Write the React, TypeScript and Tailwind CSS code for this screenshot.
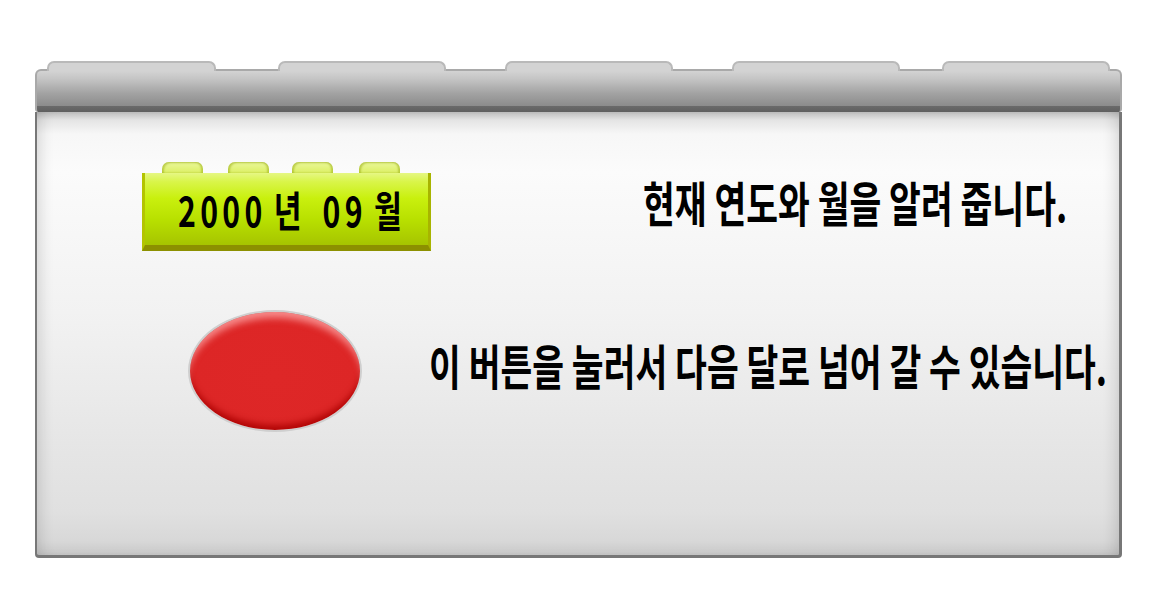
import React from "react";

const KR = { fontFamily: '"Noto Sans CJK KR", "Noto Sans", sans-serif' };

export default function App() {
  const tabs = [
    { ml: "ml-[12px]", w: "w-[169px]" },
    { ml: "ml-[62px]", w: "w-[168px]" },
    { ml: "ml-[59px]", w: "w-[168px]" },
    { ml: "ml-[59px]", w: "w-[168px]" },
    { ml: "ml-[42px]", w: "w-[168px]" },
  ];
  const studs = ["ml-[20px]", "ml-[25px]", "ml-[23px]", "ml-[26px]"];
  return (
    <div className="w-[1157px] h-[597px] bg-white overflow-hidden pt-[61px] pl-[35px]" style={KR}>
      <div className="w-[1087px] flex flex-col">
        {/* tabs */}
        <div className="flex h-[9px] relative z-10 -mb-px">
          {tabs.map((t, i) => (
            <div
              key={i}
              className={`${t.ml} ${t.w} h-[10px] rounded-t-[7px] border-t-2 border-x-2 border-[#b9b9b9] bg-[#d3d3d3]`}
            />
          ))}
        </div>
        {/* bar */}
        <div className="h-[43px] rounded-t-[6px] rounded-b-[3px] border-t-2 border-x-2 border-[#a9a9a9] bg-[linear-gradient(to_bottom,#d3d3d3_0%,#c4c4c4_20%,#a2a2a2_55%,#8c8c8c_85%,#6a6a6a_86%,#5f5f5f_100%)]" />
        {/* panel */}
        <div className="relative w-[1087px] h-[446px] rounded-b-[4px] border-l-2 border-r-[3px] border-b-[3px] border-[#777777] bg-[linear-gradient(to_bottom,#bdbdbd_0px,#e4e4e4_8px,#f7f7f7_22px,#fbfbfb_60px,#f2f2f2_200px,#e6e6e6_330px,#e0e0e0_400px,#d4d4d4_100%)]">
          <div className="absolute inset-0 shadow-[inset_14px_0_14px_-10px_rgba(0,0,0,0.13),inset_-14px_0_14px_-10px_rgba(0,0,0,0.13),inset_0_-12px_14px_-10px_rgba(0,0,0,0.12)] pointer-events-none" />
          <div className="relative flex flex-col pt-[50px]">
            {/* row 1 */}
            <div className="flex items-start">
              <div className="ml-[105px] flex flex-col w-[289px] shrink-0">
                <div className="flex h-[11px] items-end">
                  {studs.map((m, i) => (
                    <div
                      key={i}
                      className={`${m} w-[41px] h-[11px] rounded-t-[7px] bg-[linear-gradient(to_bottom,#eaf79a,#dcf064)] shadow-[inset_2px_1px_2px_rgba(140,160,0,0.45),inset_-2px_0_2px_rgba(140,160,0,0.45)]`}
                    />
                  ))}
                </div>
                <div className="h-[78px] flex items-center border-l-[3px] border-r-[3px] border-b-[6px] border-l-[#b3c400] border-r-[#a8b400] border-b-[#8c9000] bg-[linear-gradient(to_bottom,#e6f784_0%,#d9f54a_12%,#c9f00e_35%,#b8e000_65%,#a6c400_100%)]">
                  <div className="ml-[33px] flex items-center origin-left scale-x-[0.72] whitespace-pre text-[42px] font-bold leading-none text-black">
                    <span className="tracking-[6px]">2000</span>
                    <span className="ml-[10px]">년</span>
                    <span className="ml-[29px] tracking-[6px]">09</span>
                    <span className="ml-[10px]">월</span>
                  </div>
                </div>
              </div>
              <div className="ml-[212px] mt-[15px]">
                <span className="inline-block origin-left scale-x-[0.72] whitespace-pre text-[48px] font-bold leading-none text-black">
                  현재 연도와 월을 알려 줍니다.
                </span>
              </div>
            </div>
            {/* row 2 */}
            <div className="flex items-center mt-[59px]">
              <div className="ml-[151px] shrink-0 w-[174px] h-[122px] rounded-[50%] border-2 border-[#cfcfcf] bg-[radial-gradient(ellipse_at_50%_55%,#de2727_0%,#dd2626_70%,#c41010_100%)] shadow-[inset_0_9px_7px_-3px_rgba(255,170,170,0.75),inset_0_-8px_6px_-3px_rgba(170,0,0,0.85)]" />
              <div className="ml-[67px] -mt-[12px]">
                <span className="inline-block origin-left scale-x-[0.72] whitespace-pre text-[48px] font-bold leading-none text-black">
                  이 버튼을 눌러서 다음 달로 넘어 갈 수 있습니다.
                </span>
              </div>
            </div>
          </div>
        </div>
      </div>
    </div>
  );
}
